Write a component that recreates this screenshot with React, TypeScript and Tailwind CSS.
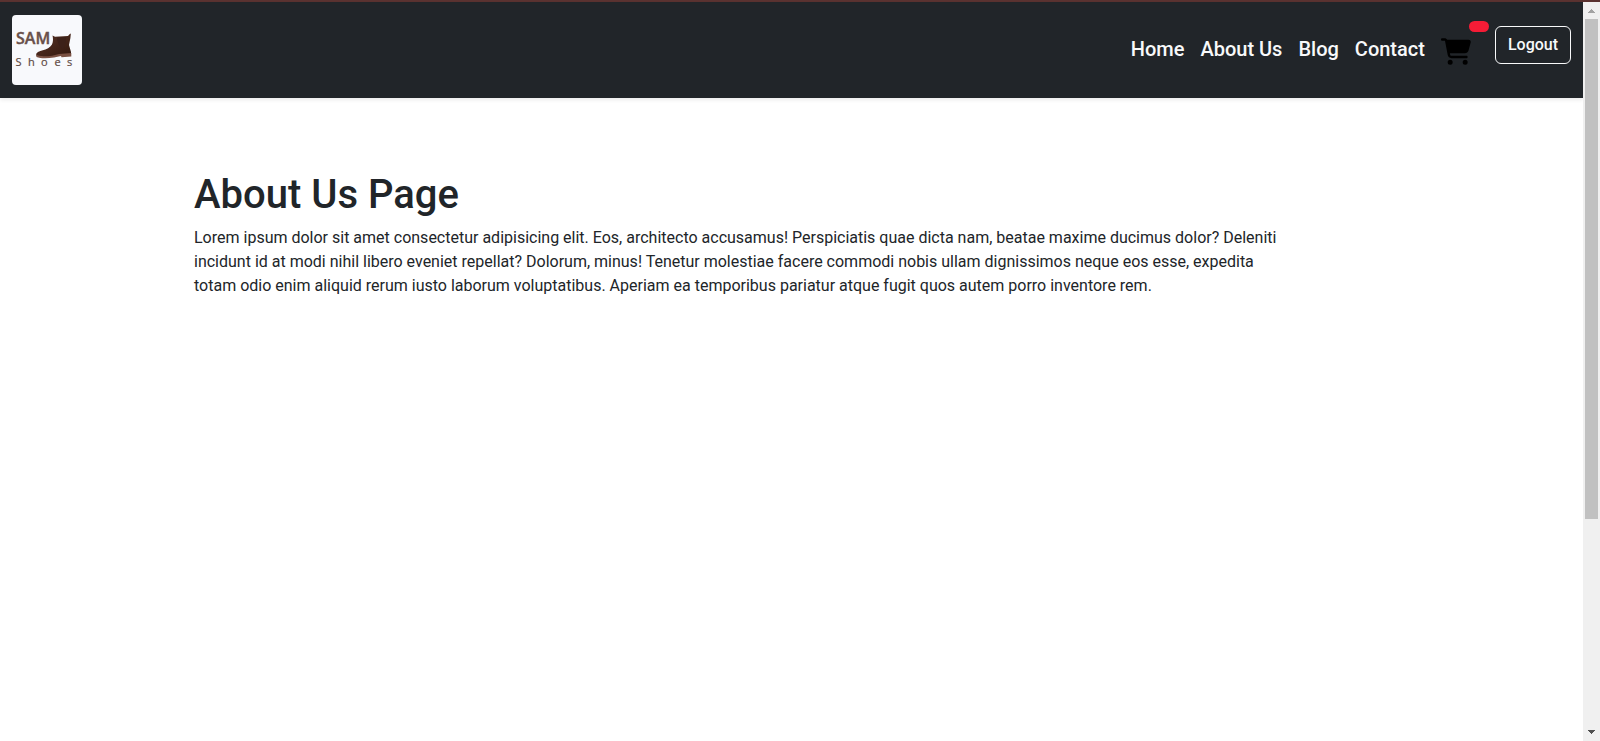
import { FaCartShopping } from "react-icons/fa6";

const links = ["Home", "About Us", "Blog", "Contact"];

function Logo() {
  return (
    <a href="#home" aria-label="SAM Shoes" className="block size-[70px] overflow-hidden rounded bg-[#f8f9fc]">
      <svg viewBox="0 0 70 70" className="size-full" aria-hidden="true">
        <defs>
          <linearGradient id="leather" x1="0" y1="0" x2="1" y2="1">
            <stop offset="0" stopColor="#5a3426" />
            <stop offset="1" stopColor="#32180f" />
          </linearGradient>
        </defs>
        <text x="4" y="28.500" fontFamily="Open Sans, sans-serif" fontWeight="600" fontSize="16" fill="#69504a" stroke="#69504a" strokeWidth="0.400">
          SAM
        </text>
        <path
          d="M40.500 20.500 L43 21.800 L56 21 L58.300 18.500 L58.800 19 L58.400 23 L57 30 L59 37 L59 40 L47 40.500 L41 41.500 C34 42.500 28 42 24.500 40.500 C23.500 38.500 25.500 36.500 30 35.500 C35 34.300 38 32.500 40 29.500 C41.300 26.500 41.200 23.500 40.500 20.500 Z"
          fill="url(#leather)"
        />
        <path d="M45 22.500 L54 22 C54.500 27 53 31.500 50.500 34.500 C47 31.500 45 27 45 22.500 Z" fill="#3d2119" />
        <path d="M24 39.800 C30 41.800 37 41.800 42 40.200 L47 39 L59.300 38 L59.300 41.500 L49.500 42.200 L49 41 L42 42.500 C35 43.700 28 43.500 24.500 42 Z" fill="#7a5143" />
        <g fontFamily="Open Sans, sans-serif" fontWeight="400" fontSize="11" fill="#5e4943" stroke="#5e4943" strokeWidth="0.200">
          <text x="3.500" y="51">S</text>
          <text x="16" y="51">h</text>
          <text x="29" y="51">o</text>
          <text x="42.500" y="51">e</text>
          <text x="55" y="51">s</text>
        </g>
      </svg>
    </a>
  );
}

function Header() {
  return (
    <header className="flex h-24 items-center justify-between bg-[#212529] px-3 shadow-[0_2px_4px_rgba(0,0,0,0.08)]">
      <Logo />
      <div className="flex items-center pb-0.5">
        <nav className="flex">
          {links.map((label) => (
            <a key={label} href="#" className="px-2 text-xl leading-[30px] font-medium text-[#f8f9fa]">
              {label}
            </a>
          ))}
        </nav>
        <a href="#cart" aria-label="Cart" className="relative mx-2 block pt-1">
          <FaCartShopping className="h-[27px] w-[30px] text-black" />
          <span className="absolute -top-[13px] left-7 h-[11px] w-5 rounded-md bg-[#f51c36]" />
        </a>
        <button
          type="button"
          className="mb-2 ml-4 h-[38px] rounded-md border border-[#f8f9fa] px-3 text-base leading-6 font-medium text-[#f8f9fa]"
        >
          Logout
        </button>
      </div>
    </header>
  );
}

function ScrollTrack() {
  return (
    <div className="flex w-[17px] shrink-0 flex-col items-center bg-[#f0f0f0]" aria-hidden="true">
      <svg viewBox="0 0 17 17" className="size-[17px] shrink-0" shapeRendering="crispEdges">
        <path d="M8 7h1v1h1v1h1v1h1v1H5v-1h1V9h1V8h1z" fill="#a3a3a3" />
      </svg>
      <div className="h-[500px] w-[13px] shrink-0 bg-[#c1c1c1]" />
      <svg viewBox="0 0 17 17" className="mt-auto size-[17px] shrink-0" shapeRendering="crispEdges">
        <path d="M5 6h7v1h-1v1h-1v1H9v1H8V9H7V8H6V7H5z" fill="#505050" />
      </svg>
    </div>
  );
}

export default function App() {
  return (
    <div className="flex min-h-screen flex-col border-t-2 border-[#5a3230] bg-white font-[Roboto,sans-serif] text-[#212529]">
      <div className="flex grow">
        <div className="min-w-0 grow">
          <Header />
          <main className="mx-auto max-w-[1195px] pt-[73px]">
            <h1 className="mb-[7px] text-[40px] leading-12 font-medium">About Us Page</h1>
            <p className="max-w-[1096px] text-base leading-6">
              Lorem ipsum dolor sit amet consectetur adipisicing elit. Eos, architecto accusamus! Perspiciatis quae
              dicta nam, beatae maxime ducimus dolor? Deleniti incidunt id at modi nihil libero eveniet repellat?
              Dolorum, minus! Tenetur molestiae facere commodi nobis ullam dignissimos neque eos esse, expedita totam
              odio enim aliquid rerum iusto laborum voluptatibus. Aperiam ea temporibus pariatur atque fugit quos autem
              porro inventore rem.
            </p>
          </main>
        </div>
        <ScrollTrack />
      </div>
    </div>
  );
}
